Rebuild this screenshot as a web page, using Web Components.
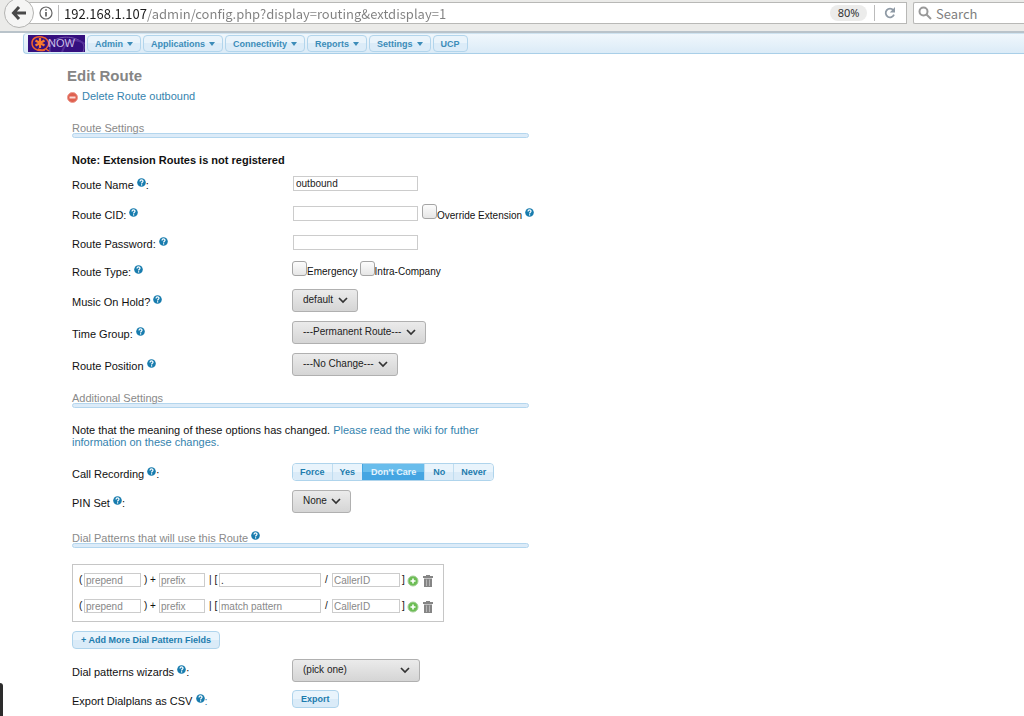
<!DOCTYPE html>
<html lang="en">
<head>
<meta charset="utf-8">
<title>Edit Route</title>
<style>
  body { margin: 0; background: #fff; color: #111; font: 11px/12px "Liberation Sans", Arial, sans-serif; }
</style>
</head>
<body>
<route-page></route-page>

<template id="t-toolbar">
  <style>
    :host { display: flex; align-items: flex-start; box-sizing: border-box; height: 33px; padding: 2px 0 0 4px; overflow: hidden;
      background: #ebebe9; border-bottom: 2px solid #b9c3ca; font: 13px/18px "Noto Sans CJK SC", "Noto Sans", sans-serif; color: #888; }
    .back { flex: none; width: 30px; height: 30px; margin: -4px -15px 0 0; padding: 0; border: 1px solid #b4b4b2; border-radius: 50%;
      background: #f5f5f4; position: relative; z-index: 1; display: grid; place-items: center; }
    .box { display: flex; align-items: center; box-sizing: border-box; height: 22px; border: 1px solid #b8b8b6; background: #fff; }
    .url { flex: 1; padding: 0 8px 0 19px; min-width: 0; }
    .search { flex: none; width: 111px; margin-left: 6px; padding-left: 4px; border-right: 0; border-radius: 2px 0 0 2px; }
    input { border: 0; outline: 0; padding: 0; background: none; font: inherit; min-width: 0; flex: 1; height: 20px; color: #808080; }
    input::placeholder { color: #808080; opacity: 1; }
    .address { -webkit-text-fill-color: transparent; background: linear-gradient(90deg, #1c1c1c 83px, #808080 83px); -webkit-background-clip: text; background-clip: text; }
    .sep { width: 1px; height: 16px; background: #bbb; margin: 0 5px; flex: none; }
    .zoom { border: 0; border-radius: 8px; background: #ececeb; color: #333; font: 11px/16px "Noto Sans", sans-serif; height: 16px; width: 37px; padding: 0; }
    .reload { border: 0; background: none; padding: 0; width: 14px; height: 14px; margin-left: 2px; }
    .zoom + .sep { margin: 0 7px; }
    .search input { margin-left: 4px; }
    svg { display: block; flex: none; }
  </style>
  <button class="back" aria-label="Back"><svg width="16" height="14" viewBox="0 0 16 14" fill="none" stroke="#484848" stroke-width="3"><path d="M8 1 2.500 7 8 13M3 7H15"/></svg></button>
  <div class="box url">
    <svg width="14" height="14" viewBox="0 0 14 14"><circle cx="7" cy="7" r="6" fill="none" stroke="#666" stroke-width="1.200"/><path d="M7 6v4.500M7 3.200v1.600" stroke="#555" stroke-width="1.600"/></svg>
    <span class="sep"></span>
    <input class="address" aria-label="Address" value="192.168.1.107/admin/config.php?display=routing&amp;extdisplay=1">
    <button class="zoom">80%</button>
    <span class="sep"></span>
    <button class="reload" aria-label="Reload"><svg width="12" height="12" viewBox="0 0 12 12"><path d="M9.300 3.200A4.300 4.300 0 1 0 10 7.600" fill="none" stroke="#8f9aa5" stroke-width="1.800"/><path d="M11 0v5.500H5.800z" fill="#8f9aa5"/></svg></button>
  </div>
  <div class="box search">
    <svg width="14" height="14" viewBox="0 0 14 14" fill="none" stroke="#999" stroke-width="2"><circle cx="5.500" cy="5.500" r="4"/><path d="M8.500 8.500 13 13"/></svg>
    <input aria-label="Search" placeholder="Search">
  </div>
</template>

<template id="t-nav">
  <style>
    :host { display: flex; align-items: center; gap: 2px; box-sizing: border-box; height: 21px; margin-left: 23px; padding-left: 4px;
      border: 1px solid #a9cfe8; border-top-color: #cfe3f0; border-right: 0; border-radius: 4px 0 0 4px; background: linear-gradient(#f0f7fc, #dbebf7); }
    svg { display: block; }
    text { font: 11px "Liberation Sans", Arial, sans-serif; }
  </style>
  <a href="#" aria-label="Home"><svg width="57" height="17" viewBox="0 0 57 17">
    <rect width="57" height="17" fill="#35107f"/>
    <path d="M22 17C20 5 33 0 45 3s12 9 10 14" fill="none" stroke="#7657ac" stroke-width="1"/>
    <path d="M34 17C38 5 48 2 57 9" fill="none" stroke="#54309a" stroke-width="2"/>
    <path d="M17 15C9 17 4 13 4 8S9 1 14 2s8 5 6 9-6 5-10 3M18 14l3 2" fill="none" stroke="#f0642d" stroke-width="1.500"/>
    <path d="M12 3v10M7.500 5.500l9 5M16.500 5.500l-9 5" stroke="#fa7a2e" stroke-width="2.200"/>
    <text x="20" y="12" fill="#c9bfe6">NOW</text>
  </svg></a>
  <nav-item arrow>Admin</nav-item><nav-item arrow>Applications</nav-item><nav-item arrow>Connectivity</nav-item><nav-item arrow>Reports</nav-item><nav-item arrow>Settings</nav-item><nav-item>UCP</nav-item>
</template>

<template id="t-nav-item">
  <style>
    :host { display: block; }
    button { display: flex; align-items: center; gap: 4px; height: 17px; padding: 0 7px; border: 1px solid #b2d5ec; border-radius: 4px;
      background: linear-gradient(#eaf4fb 50%, #dcecf8 50%); color: #3c8cb9; font: bold 9px/12px "Liberation Sans", Arial, sans-serif; }
    svg { display: none; }
    :host([arrow]) svg { display: block; }
  </style>
  <button><slot></slot><svg width="6" height="4" viewBox="0 0 6 4"><path d="M0 0h6L3 4z" fill="#3c8cb9"/></svg></button>
</template>

<template id="t-help">
  <style>
    :host { display: inline-block; width: 9px; height: 9px; vertical-align: 2px; }
    svg { display: block; }
  </style>
  <svg width="9" height="9" viewBox="0 0 9 9" role="img" aria-label="Help"><circle cx="4.500" cy="4.500" r="4.300" fill="#187cae"/><path d="M3 3.500C3 1.400 6.100 1.500 6 3.300 6 4.300 4.600 4.300 4.600 5.500M4.600 6.300v1.200" fill="none" stroke="#fff" stroke-width="1.200"/></svg>
</template>

<template id="t-heading">
  <style>
    :host { display: block; width: 457px; max-width: 100%; }
    h2 { margin: 0; font: 11px/10px "Liberation Sans", Arial, sans-serif; color: #8a8a8a; position: relative; }
    div { box-sizing: border-box; height: 5px; border: 1px solid #b4d6ee; border-radius: 3px; background: #dcebf8; }
  </style>
  <h2><slot></slot></h2><div></div>
</template>

<template id="t-row">
  <style>
    :host { display: grid; grid-template-columns: 220px 1fr; align-items: center; height: 32px; }
    :host([size="s"]) { height: 28px; }
    :host([size="m"]) { height: 30px; }
    .label { padding-top: 3px; }
    .field { display: flex; align-items: center; font-size: 10px; }
  </style>
  <div class="label"><slot name="label"></slot></div>
  <div class="field"><slot></slot></div>
</template>

<template id="t-select">
  <style>
    :host { display: inline-block; position: relative; }
    ::slotted(select) { appearance: none; display: block; box-sizing: border-box; height: 23px; margin: 0; padding: 0 23px 0 10px; border: 1px solid #b0b0b0;
      border-radius: 3px; background: linear-gradient(#ebebeb, #d5d5d5); color: #222; font: 10px/12px "Liberation Sans", Arial, sans-serif; }
    svg { position: absolute; right: 10px; top: 8px; pointer-events: none; }
  </style>
  <slot></slot><svg width="10" height="7" viewBox="0 0 10 7"><path d="M1 1l4 4 4-4" fill="none" stroke="#333" stroke-width="1.700"/></svg>
</template>

<template id="t-check">
  <style>
    :host { display: inline-flex; align-items: center; }
    ::slotted(input) { appearance: none; box-sizing: border-box; width: 15px; height: 15px; margin: 0 0 4px; border: 1px solid #a5a5a5; border-radius: 3px; background: linear-gradient(#fcfcfc, #e6e6e6); }
    ::slotted(label) { padding-top: 4px; }
  </style>
  <slot></slot>
</template>

<template id="t-button">
  <style>
    :host { display: inline-block; }
    button { display: block; height: 18px; padding: 0 8px; border: 1px solid #afd4ec; border-radius: 4px; background: linear-gradient(#e9f4fc 50%, #daebf8 50%);
      color: #1d7cae; font: bold 9px/12px "Liberation Sans", Arial, sans-serif; }
  </style>
  <button type="button"><slot></slot></button>
</template>

<template id="t-choice">
  <style>
    :host { display: block; }
    fieldset { display: flex; margin: 0; padding: 0; min-width: 0; border: 1px solid #afd4ec; border-radius: 4px; overflow: hidden; }
    input { appearance: none; position: absolute; margin: 0; width: 1px; height: 1px; opacity: 0; }
    label { padding: 0 7px; height: 16px; font: bold 9px/16px "Liberation Sans", Arial, sans-serif; color: #1d7cae; background: linear-gradient(#e9f4fc 50%, #daebf8 50%); }
    label + input + label { border-left: 1px solid #c0ddf0; }
    label.wide { padding: 0 8px; }
    input:checked + label { background: linear-gradient(#69bdec 50%, #45a5e2 50%); color: #e6f4fd; border-color: #45a5e2; }
  </style>
  <fieldset aria-label="Call Recording">
    <input type="radio" name="rec" id="r1"><label for="r1">Force</label>
    <input type="radio" name="rec" id="r2"><label for="r2">Yes</label>
    <input type="radio" name="rec" id="r3" checked><label for="r3" class="wide">Don't Care</label>
    <input type="radio" name="rec" id="r4"><label for="r4" class="wide">No</label>
    <input type="radio" name="rec" id="r5"><label for="r5">Never</label>
  </fieldset>
</template>

<template id="t-pattern">
  <style>
    :host { display: grid; grid-template-columns: 5px 57px 18px 46px 14px 102px 11px 68px 7px 15px 12px; align-items: center; height: 26px; font-size: 10px; }
    input { box-sizing: border-box; width: 100%; height: 14px; padding: 0 1px; border: 1px solid #ccc; font: 10px/12px "Liberation Sans", Arial, sans-serif; color: #222; outline: 0; }
    input::placeholder { color: #888; opacity: 1; }
    .c { text-align: center; } .r { padding-left: 4px; white-space: pre; }
    button { border: 0; padding: 2px 0 0; background: none; display: block; }
    svg { display: block; }
  </style>
  <span>(</span><input aria-label="Prepend" placeholder="prepend"><span class="c">) +</span><input aria-label="Prefix" placeholder="prefix">
  <span class="r">| [</span><input class="match" aria-label="Match pattern" placeholder="match pattern"><span class="c">/</span><input aria-label="Caller ID" placeholder="CallerID"><span class="c">]</span>
  <button type="button" aria-label="Add"><svg width="12" height="12" viewBox="0 0 12 12"><circle cx="6" cy="6" r="5" fill="#6cbd54" stroke="#a4cf98"/><path d="M6 3.500v5M3.500 6h5" stroke="#fff" stroke-width="1.600"/></svg></button>
  <button type="button" aria-label="Remove"><svg width="12" height="12" viewBox="0 0 12 12"><path d="M4 1V0h4v1h3v2H1V1zM2 3.500h8V12H2z" fill="#858585"/><path d="M4.500 4.500v6.500M7.500 4.500v6.500" stroke="#b5b5b5"/></svg></button>
</template>

<template id="t-page">
  <style>
    :host { display: block; }
    main { padding: 13px 16px 0 67px; }
    h1 { margin: 0; font: bold 15px/18px "Liberation Sans", Arial, sans-serif; color: #858585; }
    a { color: #3583ae; text-decoration: none; }
    .delete { display: flex; align-items: center; gap: 4px; margin-top: 5px; line-height: 13px; }
    .delete svg { display: block; margin-top: 2px; }
    form { padding: 20px 0 0 5px; }
    .note { margin: 16px 0 2px; font-weight: bold; }
    .info { margin: 16px 0 9px; width: 457px; max-width: 100%; }
    section-heading.next { margin-top: 13px; }
    section-heading.last { margin-top: 16px; }
    .text { box-sizing: border-box; width: 125px; height: 15px; margin: 0 4px 0 1px; padding: 0 2px; border: 1px solid #ccc; outline: 0; color: #222; font: 10px/12px "Liberation Sans", Arial, sans-serif; }
    check-box { margin-right: 2px; }
    .patterns { box-sizing: border-box; width: 372px; max-width: 100%; margin: 16px 0 9px; padding: 2px 6px; border: 1px solid #c6c6c6; }
    .patterns + push-button { display: block; width: fit-content; margin-bottom: 6px; }
    .wizard { width: 128px; }
    .corner { position: fixed; left: 0; bottom: 0; width: 3px; height: 33px; border-radius: 0 4px 0 0; background: #2c2c2c; }
  </style>
  <browser-toolbar></browser-toolbar>
  <site-nav></site-nav>
  <main>
    <h1>Edit Route</h1>
    <a class="delete" href="#"><svg width="11" height="11" viewBox="0 0 11 11"><circle cx="5.500" cy="5.500" r="5" fill="#df604f" stroke="#eb9a8e"/><path d="M2.500 5.500h6" stroke="#fbd9d4" stroke-width="2"/></svg>Delete Route outbound</a>
    <form>
      <section-heading>Route Settings</section-heading>
      <p class="note">Note: Extension Routes is not registered</p>
      <form-row size="m"><label slot="label" for="name">Route Name <help-tip></help-tip>:</label><input class="text" id="name" value="outbound"></form-row>
      <form-row size="m"><label slot="label" for="cid">Route CID: <help-tip></help-tip></label><input class="text" id="cid"><check-box><input type="checkbox" id="over"><label for="over">Override Extension <help-tip></help-tip></label></check-box></form-row>
      <form-row size="s"><label slot="label" for="pass">Route Password: <help-tip></help-tip></label><input class="text" id="pass" type="password"></form-row>
      <form-row size="s"><span slot="label">Route Type: <help-tip></help-tip></span><check-box><input type="checkbox" id="em"><label for="em">Emergency</label></check-box><check-box><input type="checkbox" id="intra"><label for="intra">Intra-Company</label></check-box></form-row>
      <form-row><label slot="label" for="moh">Music On Hold? <help-tip></help-tip></label><select-box><select id="moh"><option>default</option></select></select-box></form-row>
      <form-row><label slot="label" for="time">Time Group: <help-tip></help-tip></label><select-box><select id="time"><option>---Permanent Route---</option></select></select-box></form-row>
      <form-row><label slot="label" for="pos">Route Position <help-tip></help-tip></label><select-box><select id="pos"><option>---No Change---</option></select></select-box></form-row>
      <section-heading class="next">Additional Settings</section-heading>
      <p class="info">Note that the meaning of these options has changed. <a href="#">Please read the wiki for futher information on these changes.</a></p>
      <form-row size="m"><span slot="label">Call Recording <help-tip></help-tip>:</span><choice-bar></choice-bar></form-row>
      <form-row size="s"><label slot="label" for="pin">PIN Set <help-tip></help-tip>:</label><select-box><select id="pin"><option>None</option></select></select-box></form-row>
      <section-heading class="last">Dial Patterns that will use this Route <help-tip></help-tip></section-heading>
      <div class="patterns"><dial-pattern value="."></dial-pattern><dial-pattern></dial-pattern></div>
      <push-button>+ Add More Dial Pattern Fields</push-button>
      <form-row size="m"><label slot="label" for="wiz">Dial patterns wizards <help-tip></help-tip>:</label><select-box><select id="wiz" class="wizard"><option>(pick one)</option></select></select-box></form-row>
      <form-row size="s"><span slot="label">Export Dialplans as CSV <help-tip></help-tip><a href="#">:</a></span><push-button>Export</push-button></form-row>
    </form>
  </main>
  <div class="corner"></div>
</template>

<script>
  const define = (tag, id, setup) => customElements.define(tag, class extends HTMLElement {
    constructor() {
      super();
      this.attachShadow({ mode: "open" }).append(document.getElementById(id).content.cloneNode(true));
    }
    connectedCallback() { if (setup) setup(this); }
  });
  define("help-tip", "t-help");
  define("nav-item", "t-nav-item");
  define("browser-toolbar", "t-toolbar");
  define("site-nav", "t-nav");
  define("section-heading", "t-heading");
  define("form-row", "t-row");
  define("select-box", "t-select");
  define("check-box", "t-check");
  define("push-button", "t-button");
  define("choice-bar", "t-choice");
  define("dial-pattern", "t-pattern", el => {
    el.shadowRoot.querySelector(".match").value = el.getAttribute("value") || "";
  });
  define("route-page", "t-page");
</script>
</body>
</html>
